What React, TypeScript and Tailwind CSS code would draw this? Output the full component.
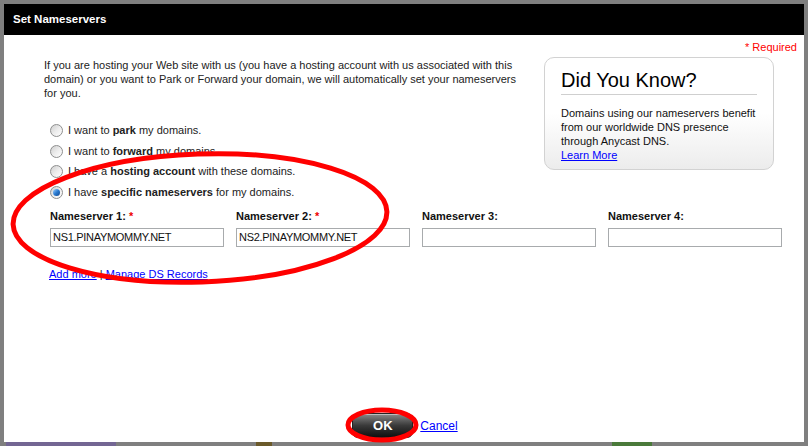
import { ReactNode } from "react"

const font = "font-['Liberation_Sans',Arial,sans-serif]"

function Radio({ checked }: { checked?: boolean }) {
  return (
    <span className="flex h-[13px] w-[13px] shrink-0 items-center justify-center rounded-full border border-[#8e8f8f] bg-gradient-to-br from-[#cfcfcf] via-[#ececec] to-white">
      {checked && <span className="h-[7px] w-[7px] rounded-full bg-gradient-to-br from-[#9fd3ff] via-[#2a7bd0] to-[#12478f]" />}
    </span>
  )
}

function Option({ checked, children }: { checked?: boolean; children: ReactNode }) {
  return (
    <label className="flex h-[20.7px] items-center gap-[5px]">
      <Radio checked={checked} />
      <span className="text-[11px] leading-[13px] text-[#222]">{children}</span>
    </label>
  )
}

function NameserverField({ n, required, value }: { n: number; required?: boolean; value?: string }) {
  return (
    <div className="flex w-[174px] flex-col gap-[5px]">
      <div className="text-[11px] font-bold leading-[13px] text-[#111]">
        Nameserver {n}:{required && <span className="text-[#e00]"> *</span>}
      </div>
      <input
        readOnly
        value={value ?? ""}
        className="h-[19px] w-[174px] border border-[#a8abad] bg-white px-[2px] text-[11px] tracking-[-0.3px] text-[#111] outline-none"
      />
    </div>
  )
}

export default function App() {
  return (
    <div className={`relative h-[446px] w-[808px] overflow-hidden bg-[#7f7f7f] ${font}`}>
      <div className="flex h-[442px] flex-col pl-[4px] pt-[4px]">
        <div className="flex h-[438px] w-[800px] flex-col bg-white">
          <div className="flex h-[31px] items-center bg-black pl-[9px] text-[11.5px] font-bold text-white">
            Set Nameservers
          </div>

          <div className="flex justify-end pr-[7px] pt-[6px] text-[11px] leading-[13px] text-[#f00]">* Required</div>

          <div className="flex pl-[40px]">
            <div className="flex w-[500px] flex-col">
              <p className="mt-[4px] text-[11px] leading-[14px] text-[#222]">
                If you are hosting your Web site with us (you have a hosting account with us associated with this
                <br />
                domain) or you want to Park or Forward your domain, we will automatically set your nameservers
                <br />
                for you.
              </p>
              <div className="mt-[20px] flex flex-col pl-[6px]">
                <Option>
                  I want to <b>park</b> my domains.
                </Option>
                <Option>
                  I want to <b>forward</b> my domains.
                </Option>
                <Option>
                  I have a <b>hosting account</b> with these domains.
                </Option>
                <Option checked>
                  I have <b>specific nameservers</b> for my domains.
                </Option>
              </div>
            </div>

            <div className="mt-[3px] flex h-[113px] w-[230px] flex-col rounded-[10px] border border-[#d2d2d2] bg-gradient-to-b from-white from-50% to-[#ececec] px-[16px]">
              <div className="mt-[11px] border-b border-[#cfcfcf] pb-[3px] text-[20px] leading-[22px] text-black">Did You Know?</div>
              <p className="mt-[11px] text-[11px] leading-[14px] text-[#111]">
                Domains using our nameservers benefit
                <br />
                from our worldwide DNS presence
                <br />
                through Anycast DNS.
                <br />
                <a className="text-[#00f] underline">Learn More</a>
              </p>
            </div>
          </div>

          <div className="mt-[7px] flex gap-[12px] pl-[46px]">
            <NameserverField n={1} required value="NS1.PINAYMOMMY.NET" />
            <NameserverField n={2} required value="NS2.PINAYMOMMY.NET" />
            <NameserverField n={3} />
            <NameserverField n={4} />
          </div>

          <div className="mt-[21px] pl-[45px] text-[11px] leading-[13px] text-[#222]">
            <a className="text-[#00f] underline">Add more</a> | <a className="text-[#00f] underline">Manage DS Records</a>
          </div>

          <div className="mt-auto mb-[4px] flex items-center justify-center gap-[7px] pl-[2px]">
            <button className="flex h-[25px] w-[61px] items-center justify-center rounded-[6px] border border-[#222] bg-gradient-to-b from-[#8a8a8a] via-[#3a3a3a] to-[#111] text-[13px] font-bold text-white shadow-[inset_0_1px_0_#bdbdbd]">
              OK
            </button>
            <a className="text-[12px] text-[#00f] underline">Cancel</a>
          </div>
        </div>
      </div>
      <div className="flex h-[4px] items-start gap-[40px] pl-[6px]">
        <span className="h-[4px] w-[110px] bg-[#6a55a0] opacity-60" />
        <span className="ml-[100px] h-[4px] w-[16px] bg-[#6b5a2a]" />
        <span className="ml-[300px] h-[4px] w-[40px] bg-[#4a7a3a]" />
      </div>

      <svg className="pointer-events-none absolute inset-0" width="808" height="446" viewBox="0 0 808 446">
        <ellipse cx="200" cy="218" rx="187" ry="64" transform="rotate(-2 200 218)" fill="none" stroke="#f00" strokeWidth="5" />
        <ellipse cx="382" cy="425" rx="34" ry="15" fill="none" stroke="#f00" strokeWidth="5" />
      </svg>
    </div>
  )
}
